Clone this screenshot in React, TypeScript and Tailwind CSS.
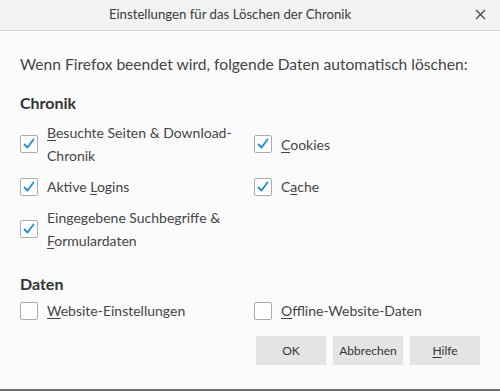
import type { ReactNode } from 'react'

const font = { fontFamily: 'Lato, "Noto Sans", sans-serif' }

function Box({ checked }: { checked: boolean }) {
  return (
    <span className="w-[18px] h-[18px] shrink-0 rounded-[2px] border border-[#acacac] bg-white grid place-items-center">
      {checked && (
        <svg width="14" height="14" viewBox="0 0 14 14" fill="none">
          <path d="M2.5 7.5 L5.5 10.5 L11.5 2.5" stroke="#1b8ce3" strokeWidth="1.8" strokeLinecap="round" strokeLinejoin="round" />
        </svg>
      )}
    </span>
  )
}

function Check({ checked, children }: { checked: boolean; children: ReactNode }) {
  return (
    <label className="flex items-center gap-[9px]">
      <Box checked={checked} />
      <span className="leading-[23px]">{children}</span>
    </label>
  )
}

const U = ({ children }: { children: ReactNode }) => <span className="underline underline-offset-2">{children}</span>

export default function App() {
  return (
    <div className="w-[500px] h-[391px] flex flex-col bg-[#fbfbfb] text-[#454545] overflow-hidden" style={font}>
      {/* Title bar */}
      <header className="h-[31px] shrink-0 flex items-center justify-center relative pr-[40px] bg-[#f2f2f2] border-b border-[#d6d6d6] text-[13.2px] text-[#3a3a3a]">
        Einstellungen für das Löschen der Chronik
        <svg className="absolute right-[14px] top-[9px]" width="11" height="11" viewBox="0 0 11 11">
          <path d="M1 1 L10 10 M10 1 L1 10" stroke="#4a4a4a" strokeWidth="1.4" />
        </svg>
      </header>

      <div className="flex-1 flex flex-col px-5 text-[14px]">
        <p className="mt-[23px] leading-[20px] text-[15.6px]">Wenn Firefox beendet wird, folgende Daten automatisch löschen:</p>

        <h2 className="mt-[17px] text-[16px] font-bold text-[#333]">Chronik</h2>

        <div className="mt-[6px] grid grid-cols-[234px_1fr] gap-y-[8px] items-center">
          <Check checked>
            <U>B</U>esuchte Seiten &amp; Download-
            <br />
            Chronik
          </Check>
          <Check checked>
            <U>C</U>ookies
          </Check>
          <Check checked>
            Aktive <U>L</U>ogins
          </Check>
          <Check checked>
            C<U>a</U>che
          </Check>
          <Check checked>
            Eingegebene Suchbegriffe &amp;
            <br />
            <U>F</U>ormulardaten
          </Check>
        </div>

        <h2 className="mt-[20px] text-[16px] font-bold text-[#333]">Daten</h2>

        <div className="mt-[3px] grid grid-cols-[234px_1fr]">
          <Check checked={false}>
            <U>W</U>ebsite-Einstellungen
          </Check>
          <Check checked={false}>
            <U>O</U>ffline-Website-Daten
          </Check>
        </div>

        <div className="mt-[14px] flex justify-end gap-[7px]">
          {['OK', 'Abbrechen', 'Hilfe'].map((b) => (
            <button key={b} className="w-[70px] h-[29px] bg-[#e4e4e4] text-[12px] text-[#333]">
              {b === 'Hilfe' ? (
                <>
                  <U>H</U>ilfe
                </>
              ) : (
                b
              )}
            </button>
          ))}
        </div>
      </div>

      <div className="h-[2px] shrink-0 bg-[#6f6f6f]" />
    </div>
  )
}
